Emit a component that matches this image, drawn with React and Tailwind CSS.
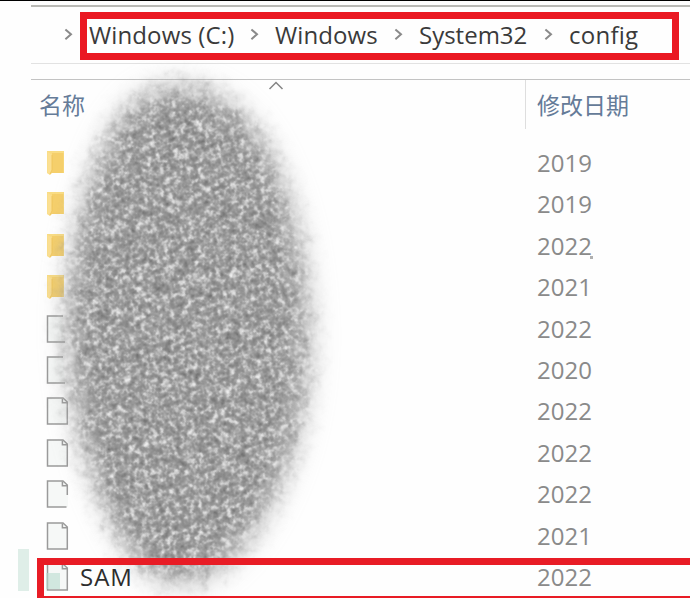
import React from "react";

const crumbs = [
  { label: "Windows (C:)", box: "w-[186px]", text: "tracking-[0.12px]" },
  { label: "Windows", box: "w-[144px]", text: "tracking-[0.1px]" },
  { label: "System32", box: "w-[150px]", text: "tracking-[0px]" },
  { label: "config", box: "w-[110px]", text: "tracking-[0.25px]" },
];

const rows = [
  { type: "folder", year: "2019" },
  { type: "folder", year: "2019" },
  { type: "folder", year: "2022", speck: true },
  { type: "folder", year: "2021" },
  { type: "file", year: "2022", covered: true },
  { type: "file", year: "2020", covered: true },
  { type: "file", year: "2022" },
  { type: "file", year: "2022" },
  { type: "file", year: "2022", worn: true },
  { type: "file", year: "2021" },
  { type: "file", year: "2022", name: "SAM" },
];

function Chevron() {
  return (
    <svg className="shrink-0" width="9" height="14" viewBox="0 0 9 14" fill="none" stroke="#8a8a8a" strokeWidth="2">
      <path d="M1.4 1.4 L7 6.3 L1.4 11.2" />
    </svg>
  );
}

function FolderIcon() {
  return (
    <svg width="24" height="28" viewBox="0 0 24 28">
      <path d="M1 2 H18 V24 H6 L4 26 L1 24 Z" fill="#f9dc83" />
      <path d="M6 4 H17.5 V24 H5 L6 20 Z" fill="#f5cf6b" />
      <path d="M1.5 2.5 L6 6 V21 L3.5 25.5 L1.5 24 Z" fill="#fbdf92" />
      <path d="M6 6 V21 L4 25" stroke="#efc45a" strokeWidth="0.9" fill="none" />
    </svg>
  );
}

function FileIcon({ worn, covered }) {
  if (covered) {
    return (
      <svg width="24" height="28" viewBox="0 0 24 28" fill="none" stroke="#9a9a9a" strokeWidth="1.5">
        <path d="M17 1 H1.5 V27 H19" fill="#f6f8f7" />
      </svg>
    );
  }
  return (
    <svg width="24" height="28" viewBox="0 0 24 28" fill="none" stroke="#9a9a9a" strokeWidth="1.5">
      <path d="M1.5 1 H17 L22 5 V27 H1.5 Z" fill="#f6f8f7" stroke="none" />
      {worn ? (
        <path d="M21.3 15 V5 L17 1 H1.5 V27 H20.5" />
      ) : (
        <path d="M1.5 1 H17 L21.3 5 V27 H1.5 Z" />
      )}
      <path d="M16.4 1.4 V5.8 H21.3" />
    </svg>
  );
}

function Smudge() {
  return (
    <svg className="pointer-events-none absolute left-0 top-0" width="690" height="598">
      <defs>
        <filter id="grain" x="0" y="0" width="100%" height="100%" colorInterpolationFilters="sRGB">
          <feTurbulence type="fractalNoise" baseFrequency="0.2" numOctaves="2" seed="21" result="fine" />
          <feColorMatrix in="fine" values="1.1 0.7 0 0 -0.4  1.1 0.7 0 0 -0.4  1.1 0.7 0 0 -0.4  0 0 0 0 1" result="a" />
          <feTurbulence type="fractalNoise" baseFrequency="0.08" numOctaves="3" seed="5" result="broad" />
          <feColorMatrix in="broad" values="0.9 0.6 0 0 -0.25  0.9 0.6 0 0 -0.25  0.9 0.6 0 0 -0.25  0 0 0 0 1" result="b" />
          <feComposite in="a" in2="b" operator="arithmetic" k1="0" k2="0.85" k3="0.5" k4="-0.16" />
          <feComponentTransfer>
            <feFuncR type="table" tableValues="0.44 0.48 0.52 0.555 0.59 0.65 0.74 0.82 0.88 0.93" />
            <feFuncG type="table" tableValues="0.44 0.48 0.52 0.555 0.59 0.65 0.74 0.82 0.88 0.93" />
            <feFuncB type="table" tableValues="0.44 0.48 0.52 0.555 0.59 0.65 0.74 0.82 0.88 0.93" />
          </feComponentTransfer>
          <feGaussianBlur stdDeviation="0.35" />
        </filter>
        <filter id="edge" x="-30%" y="-20%" width="160%" height="140%">
          <feGaussianBlur stdDeviation="12" result="soft" />
          <feTurbulence type="fractalNoise" baseFrequency="0.09" numOctaves="3" seed="3" />
          <feDisplacementMap in="soft" scale="24" xChannelSelector="R" yChannelSelector="G" />
        </filter>
        <filter id="halo" x="-30%" y="-20%" width="160%" height="140%">
          <feGaussianBlur stdDeviation="14" />
        </filter>
        <mask id="blot" maskUnits="userSpaceOnUse" x="0" y="0" width="400" height="598">
          <path
            d="M178 92 C240 92 275 155 292 235 C308 310 307 385 289 445 C268 510 230 574 176 578 C134 574 109 515 90 460 C74 400 66 330 75 270 C83 205 108 92 178 92 Z"
            fill="white"
            filter="url(#edge)"
          />
        </mask>
      </defs>
      <path
        d="M178 84 C240 84 283 155 300 235 C316 310 314 385 296 445 C276 510 235 580 185 586 C134 582 106 515 87 460 C69 400 61 330 71 270 C80 205 105 84 178 84 Z"
        fill="#a0a0a0"
        opacity="0.5"
        filter="url(#halo)"
      />
      <g mask="url(#blot)">
        <rect x="-200" y="-150" width="800" height="900" transform="rotate(27 190 330)" filter="url(#grain)" />
      </g>
    </svg>
  );
}

export default function App() {
  return (
    <div className="relative flex h-[598px] w-[690px] flex-col overflow-hidden bg-[#fefefe] font-['Open_Sans','Noto_Sans_CJK_SC',sans-serif] text-[24px] leading-none">
      <div className="h-px shrink-0 bg-black" />
      <header className="ml-[31px] mt-1 flex h-[59px] shrink-0 items-center border-b border-t-2 border-b-[#e2e2e2] border-t-[#b9b9b5] pl-[33px] text-[#3a3a3a]">
        {crumbs.map((c) => (
          <div key={c.label} className={`flex shrink-0 items-center gap-4 ${c.box}`}>
            <Chevron />
            <span className={`whitespace-nowrap ${c.text}`}>{c.label}</span>
          </div>
        ))}
      </header>
      <div className="ml-[31px] mt-[15px] flex h-[50px] shrink-0 border-t border-[#c3c3c3] text-[23px] text-[#657b98]">
        <div className="relative w-[495px] border-r border-[#dedede] pl-2 pt-[14px]">
          名称
          <svg className="absolute left-[237px] top-px" width="16" height="9" fill="none" stroke="#858585" strokeWidth="1.5">
            <path d="M1.5 8 L8 1.5 L14.5 8" />
          </svg>
        </div>
        <div className="pl-[11px] pt-[14px]">修改日期</div>
      </div>
      <main className="mt-[13.4px] flex flex-col">
        {rows.map((row, i) => (
          <div key={i} className="flex h-[41.4px] shrink-0 items-center pl-[46px]">
            {row.type === "folder" ? <FolderIcon /> : <FileIcon worn={row.worn} covered={row.covered} />}
            <span className="relative z-10 w-[467px] pl-[10px] tracking-[1px] text-[#2d2d2d]">{row.name}</span>
            <span className="relative z-10 text-[#8a8a8a]">
              {row.year}
              {row.speck && <i className="absolute -right-px -bottom-px size-[3px] bg-[#b0b0b0]" />}
            </span>
          </div>
        ))}
      </main>
      <Smudge />
      <div className="absolute left-[18px] top-[549px] h-[42px] w-[11px] bg-[#dfeee8]" />
      <div className="absolute left-[46px] top-[573px] h-[16px] w-[14px] bg-[#b9dccf] opacity-60" />
      <div className="absolute left-[80px] top-[12px] h-[48px] w-[599px] border-[7px] border-[#ea1822]" />
      <div className="absolute left-[37px] top-[558px] h-[45px] w-[670px] border-[7px] border-[#e81c25]" />
    </div>
  );
}
